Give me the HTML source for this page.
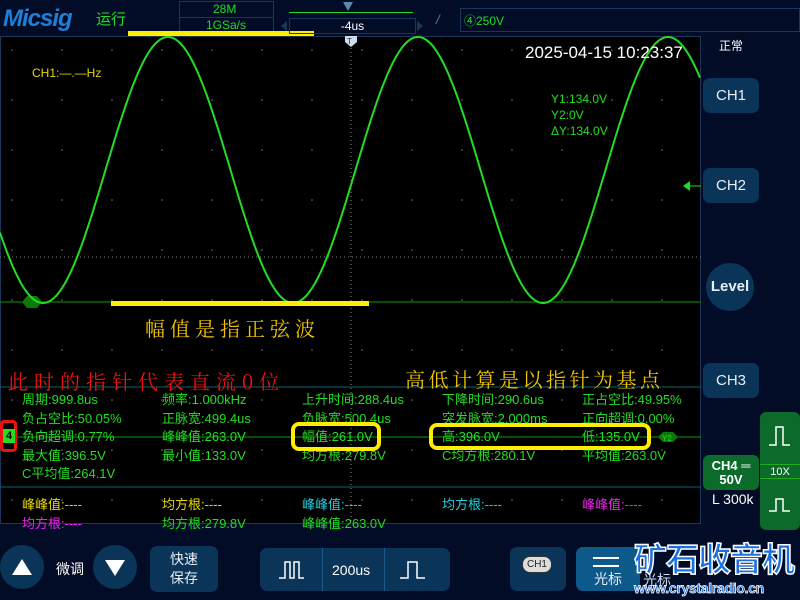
<!DOCTYPE html>
<html><head><meta charset="utf-8"><style>
*{margin:0;padding:0;box-sizing:border-box}
body{width:800px;height:600px;background:#020c26;position:relative;overflow:hidden;font-family:"Liberation Sans","Noto Sans CJK SC",sans-serif}
.a{position:absolute;white-space:nowrap}
.g{color:#22dd22;font-size:13px}
.btn{position:absolute;background:#0b3558;border-radius:7px;color:#e8eef5;text-align:center}
</style></head><body>
<!-- header -->
<div class="a" style="left:3px;top:5px;font:italic bold 24px 'Liberation Sans',sans-serif;color:#1e7fd6;letter-spacing:-1px">Micsig</div>
<div class="a" style="left:96px;top:8px;font-size:15px;color:#22dd22">运行</div>
<div class="a" style="left:179px;top:1px;width:95px;height:33px;border:1px solid #1a3658"></div>
<div class="a" style="left:180px;top:17px;width:93px;height:1px;background:#1a3658"></div>
<div class="a g" style="left:213px;top:2px;font-size:12px">28M</div>
<div class="a g" style="left:206px;top:18px;font-size:12px">1GSa/s</div>
<div class="a" style="left:128px;top:31px;width:186px;height:5px;background:#ffee00"></div>
<div class="a" style="left:289px;top:12px;width:124px;height:1px;background:#22dd22"></div>
<div class="a" style="left:343px;top:2px;width:0;height:0;border-left:5px solid transparent;border-right:5px solid transparent;border-top:9px solid #5a8aa8"></div>
<div class="a" style="left:289px;top:18px;width:127px;height:16px;border:1px solid #1a3658;color:#fff;font-size:12px;text-align:center;line-height:14px">-4us</div>
<div class="a" style="left:281px;top:21px;border-top:5px solid transparent;border-bottom:5px solid transparent;border-right:6px solid #1a3658"></div>
<div class="a" style="left:417px;top:21px;border-top:5px solid transparent;border-bottom:5px solid transparent;border-left:6px solid #1a3658"></div>
<div class="a" style="left:436px;top:12px;color:#777;font-size:13px;font-style:italic">/</div>
<div class="a" style="left:460px;top:8px;width:340px;height:24px;border:1px solid #1a3658"></div>
<div class="a g" style="left:464px;top:12px;font-size:12px">④250V</div>
<!-- plot -->
<div class="a" style="left:0;top:36px;width:701px;height:488px;background:#000;border:1px solid #1a3658"></div>
<svg class="a" style="left:0;top:36px" width="701" height="488" id="sv">
<line x1="351" y1="8" x2="351" y2="488" stroke="#888" stroke-dasharray="1,3"/>
<line x1="0" y1="221" x2="701" y2="221" stroke="#777" stroke-dasharray="1,3"/>
<line x1="0" y1="266" x2="701" y2="266" stroke="#0a9a0a" stroke-width="1"/>
<line x1="0" y1="351" x2="701" y2="351" stroke="#0a6070"/>
<line x1="0" y1="451" x2="701" y2="451" stroke="#0a6070"/>
<line x1="0" y1="401" x2="701" y2="401" stroke="#0a9a0a"/>
<polygon points="22,266 27,260 37,260 42,266 37,272 27,272" fill="#0a7a0a"/>
<polygon points="658,401 663,396 673,396 678,401 673,406 663,406" fill="#0a7a0a"/>
<text x="662" y="405" font-size="8" fill="#22dd22" font-family="Liberation Sans">Y2</text>
<polygon points="345,0 357,0 357,6 351,11 345,6" fill="#cde"/>
<text x="347" y="8" font-size="8" fill="#234" font-family="Liberation Sans">T</text>
<polygon points="683,150 690,145 690,155" fill="#22dd22"/><line x1="690" y1="150" x2="701" y2="150" stroke="#22dd22"/>
</svg>
<div class="a" style="left:111px;top:301px;width:258px;height:5px;background:#ffee00"></div>
<div class="a" style="left:145px;top:313px;font-size:20px;color:#f0c400;font-family:'Noto Serif CJK SC',serif;letter-spacing:5px">幅值是指正弦波</div>
<div class="a" style="left:32px;top:66px;font-size:12px;color:#e8d800">CH1:—.—Hz</div>
<div class="a" style="left:525px;top:43px;font-size:17px;color:#fff">2025-04-15 10:23:37</div>
<div class="a g" style="left:551px;top:91px;font-size:12px;line-height:16px">Y1:134.0V<br>Y2:0V<br>ΔY:134.0V</div>
<div class="a" style="left:8px;top:366px;font-size:20px;color:#ee1111;font-family:'Noto Serif CJK SC',serif;letter-spacing:6px">此时的指针代表直流0位</div>
<div class="a" style="left:405px;top:364px;font-size:20px;color:#f0c400;font-family:'Noto Serif CJK SC',serif;letter-spacing:3.5px">高低计算是以指针为基点</div>
<!-- measurements -->
<div class="a g" style="left:22px;top:391px;line-height:18.5px">周期:999.8us<br>负占空比:50.05%<br>负向超调:0.77%<br>最大值:396.5V<br>C平均值:264.1V</div>
<div class="a g" style="left:162px;top:391px;line-height:18.5px">频率:1.000kHz<br>正脉宽:499.4us<br>峰峰值:263.0V<br>最小值:133.0V</div>
<div class="a g" style="left:302px;top:391px;line-height:18.5px">上升时间:288.4us<br>负脉宽:500.4us<br>幅值:261.0V<br>均方根:279.8V</div>
<div class="a g" style="left:442px;top:391px;line-height:18.5px">下降时间:290.6us<br>突发脉宽:2.000ms<br>高:396.0V<br>C均方根:280.1V</div>
<div class="a g" style="left:582px;top:391px;line-height:18.5px">正占空比:49.95%<br>正向超调:0.00%<br>低:135.0V<br>平均值:263.0V</div>
<div class="a" style="left:291px;top:422px;width:90px;height:29px;border:4px solid #ffee00;border-radius:8px"></div>
<div class="a" style="left:429px;top:423px;width:222px;height:27px;border:4px solid #ffee00;border-radius:8px"></div>
<div class="a" style="left:0;top:420px;width:17px;height:32px;border:3px solid #ee1111;border-radius:4px;background:#000"></div>
<div class="a" style="left:3px;top:429px;width:12px;height:14px;background:#22dd22;font-size:11px;font-weight:bold;line-height:14px;text-align:center;color:#000">4</div>
<div class="a" style="left:22px;top:494px;font-size:13px;color:#e8d800">峰峰值:----</div>
<div class="a" style="left:162px;top:494px;font-size:13px;color:#e8d800">均方根:----</div>
<div class="a" style="left:302px;top:494px;font-size:13px;color:#22ccdd">峰峰值:----</div>
<div class="a" style="left:442px;top:494px;font-size:13px;color:#22ccdd">均方根:----</div>
<div class="a" style="left:582px;top:494px;font-size:13px;color:#ee22ee">峰峰值:----</div>
<div class="a" style="left:22px;top:513px;font-size:13px;color:#ee22ee">均方根:----</div>
<div class="a g" style="left:162px;top:513px">均方根:279.8V</div>
<div class="a g" style="left:302px;top:513px">峰峰值:263.0V</div>
<!-- right panel -->
<div class="a" style="left:719px;top:37px;font-size:12px;color:#fff">正常</div>
<div class="btn" style="left:703px;top:78px;width:56px;height:35px;line-height:35px;font-size:15px">CH1</div>
<div class="btn" style="left:703px;top:168px;width:56px;height:35px;line-height:35px;font-size:15px">CH2</div>
<div class="btn" style="left:706px;top:263px;width:48px;height:48px;border-radius:50%;line-height:48px;font-size:15px;font-weight:bold">Level</div>
<div class="btn" style="left:703px;top:363px;width:56px;height:35px;line-height:35px;font-size:15px">CH3</div>
<div class="a" style="left:760px;top:412px;width:40px;height:118px;background:#0c6a2a;border-radius:6px"></div>
<div class="a" style="left:760px;top:464px;width:40px;height:15px;border-top:1px solid #22aa22;border-bottom:1px solid #22aa22;color:#fff;font-size:11px;text-align:center;line-height:14px">10X</div>
<svg class="a" style="left:768px;top:425px" width="24" height="95"><path d="M1,20 H8 V2 H15 V20 H22" stroke="#fff" fill="none" stroke-width="1.5"/><path d="M1,86 H8 V74 H15 V86 H22" stroke="#fff" fill="none" stroke-width="1.5"/></svg>
<div class="a" style="left:703px;top:455px;width:56px;height:35px;background:#0c6a2a;border-radius:6px;color:#fff;font-weight:bold;font-size:13px;text-align:center;line-height:14px;padding-top:4px">CH4 ═<br>50V</div>
<div class="a" style="left:712px;top:491px;font-size:14px;color:#fff">L 300k</div>
<!-- bottom -->
<div class="a" style="left:0;top:545px;width:44px;height:44px;border-radius:50%;background:#0b3558"></div>
<div class="a" style="left:12px;top:559px;border-left:10px solid transparent;border-right:10px solid transparent;border-bottom:16px solid #fff"></div>
<div class="a" style="left:56px;top:559px;font-size:14px;color:#fff">微调</div>
<div class="a" style="left:93px;top:545px;width:44px;height:44px;border-radius:50%;background:#0b3558"></div>
<div class="a" style="left:105px;top:560px;border-left:10px solid transparent;border-right:10px solid transparent;border-top:16px solid #fff"></div>
<div class="btn" style="left:150px;top:546px;width:68px;height:46px;font-size:14px;line-height:19px;padding-top:4px">快速<br>保存</div>
<div class="btn" style="left:260px;top:548px;width:190px;height:43px"></div>
<div class="a" style="left:322px;top:548px;width:1px;height:43px;background:#1a5a88"></div>
<div class="a" style="left:384px;top:548px;width:1px;height:43px;background:#1a5a88"></div>
<div class="a" style="left:332px;top:562px;font-size:14px;color:#fff">200us</div>
<svg class="a" style="left:260px;top:548px" width="190" height="43"><path d="M19,30 H25 V14 H30 V30 H34 V14 H39 V30 H44" stroke="#fff" fill="none" stroke-width="1.5"/><path d="M140,30 H148 V14 H157 V30 H165" stroke="#fff" fill="none" stroke-width="1.5"/></svg>
<div class="btn" style="left:510px;top:547px;width:56px;height:44px"></div>
<div class="a" style="left:522px;top:556px;width:30px;height:17px;border-radius:8px;background:#ddd;border:1px solid #333;font-size:10px;text-align:center;line-height:15px;color:#222">CH1</div>
<div class="btn" style="left:576px;top:547px;width:64px;height:44px;background:#0d5a8a;font-size:14px;padding-top:24px;line-height:16px">光标</div>
<div class="a" style="left:593px;top:557px;width:26px;height:10px;border-top:2px solid #fff;border-bottom:2px solid #fff"></div>
<div class="a" style="left:643px;top:570px;font-size:14px;color:#cde">光标</div>
<div class="a" style="left:634px;top:537px;font-size:33px;font-weight:bold;color:#1a6fe0;letter-spacing:-1px;-webkit-text-stroke:1.5px #fff;font-family:'Noto Sans CJK SC',sans-serif;line-height:40px">矿石收音机</div>
<div class="a" style="left:634px;top:580px;font-size:14px;font-weight:bold;color:#1a6fe0;-webkit-text-stroke:0.7px #fff;letter-spacing:-0.3px">www.crystalradio.cn</div>
<script>
var s=document.getElementById('sv'),p=[];
for(var x=0;x<=700;x++){p.push(x+','+(134-133*Math.cos(2*Math.PI*(x-168)/250)).toFixed(1));}
var pl=document.createElementNS('http://www.w3.org/2000/svg','polyline');
pl.setAttribute('points',p.join(' '));pl.setAttribute('fill','none');pl.setAttribute('stroke','#22dd22');pl.setAttribute('stroke-width','2');
s.appendChild(pl);
var g='';for(var gx=12;gx<700;gx+=50)for(var gy=14;gy<488;gy+=50)g+='<circle cx="'+gx+'" cy="'+gy+'" r="0.8" fill="#777"/>';
s.insertAdjacentHTML('afterbegin',g);
</script>
</body></html>
